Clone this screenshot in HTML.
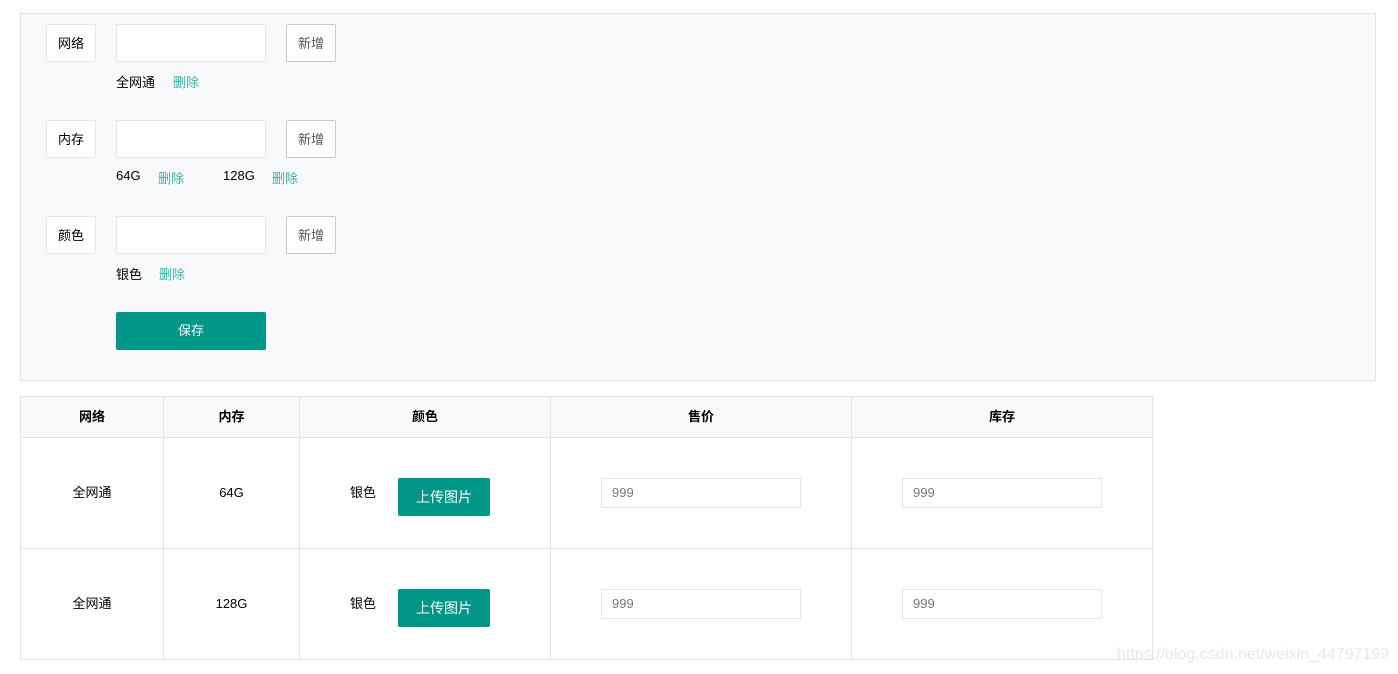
<!DOCTYPE html>
<html><head><meta charset="utf-8"><style>
*{box-sizing:border-box;margin:0;padding:0}
body{width:1398px;height:674px;background:#fff;position:relative;font-family:"Liberation Sans","Noto Sans CJK SC",sans-serif;font-size:13px;color:#000;overflow:hidden}
.a{position:absolute}
.panel{left:20px;top:13px;width:1356px;height:368px;background:#f8f9fb;border:1px solid #e2e2e2}
.lbl{width:50px;height:38px;background:#fff;border:1px solid #e6e6e6;text-align:center;line-height:38px;border-radius:2px}
.inp{width:150px;height:38px;background:#fff;border:1px solid #e6e6e6;border-radius:2px}
.btn{width:50px;height:38px;background:#fff;border:1px solid #c9c9c9;text-align:center;line-height:38px;color:#555;border-radius:2px}
.del{color:#3bb4a4}
.save{left:116px;top:312px;width:150px;height:38px;background:#009688;color:#fff;text-align:center;line-height:38px;border-radius:2px}
table{position:absolute;left:20px;top:396px;border-collapse:collapse;width:1133px}
td,th{border:1px solid #e2e2e2;text-align:center;font-size:13px}
th{height:41px;background:#f8f9fb;font-weight:bold;padding-bottom:3px}
td{height:111px;vertical-align:top;padding-top:40px;line-height:30px}
td.col{text-align:left;padding-left:50px}
.up{display:inline-block;width:92px;height:38px;line-height:38px;background:#009688;color:#fff;border-radius:2px;margin-left:22px;font-size:14px;vertical-align:top;text-align:center}
.n{display:inline-block;width:200px;height:30px;border:1px solid #e6e6e6;text-align:left;padding-left:10px;line-height:28px;color:#777;vertical-align:top}
.wm{left:1117px;top:646px;color:#e8e8e8;font-size:16px}
</style></head><body>
<div class="a panel"></div>
<div class="a lbl" style="left:46px;top:24px">网络</div>
<div class="a inp" style="left:116px;top:24px"></div>
<div class="a btn" style="left:286px;top:24px">新增</div>
<div class="a" style="left:116px;top:72px">全网通</div><div class="a del" style="left:173px;top:72px">删除</div>
<div class="a lbl" style="left:46px;top:120px">内存</div>
<div class="a inp" style="left:116px;top:120px"></div>
<div class="a btn" style="left:286px;top:120px">新增</div>
<div class="a" style="left:116px;top:168px">64G</div><div class="a del" style="left:158px;top:168px">删除</div>
<div class="a" style="left:223px;top:168px">128G</div><div class="a del" style="left:272px;top:168px">删除</div>
<div class="a lbl" style="left:46px;top:216px">颜色</div>
<div class="a inp" style="left:116px;top:216px"></div>
<div class="a btn" style="left:286px;top:216px">新增</div>
<div class="a" style="left:116px;top:264px">银色</div><div class="a del" style="left:159px;top:264px">删除</div>
<div class="a save">保存</div>
<table>
<tr><th style="width:143px">网络</th><th style="width:136px">内存</th><th style="width:251px">颜色</th><th style="width:301px">售价</th><th>库存</th></tr>
<tr><td>全网通</td><td>64G</td><td class="col"><span style="vertical-align:top">银色</span><span class="up">上传图片</span></td><td><span class="n">999</span></td><td><span class="n">999</span></td></tr>
<tr><td>全网通</td><td>128G</td><td class="col"><span style="vertical-align:top">银色</span><span class="up">上传图片</span></td><td><span class="n">999</span></td><td><span class="n">999</span></td></tr>
</table>
<div class="a wm">https://blog.csdn.net/weixin_44797199</div>
</body></html>
